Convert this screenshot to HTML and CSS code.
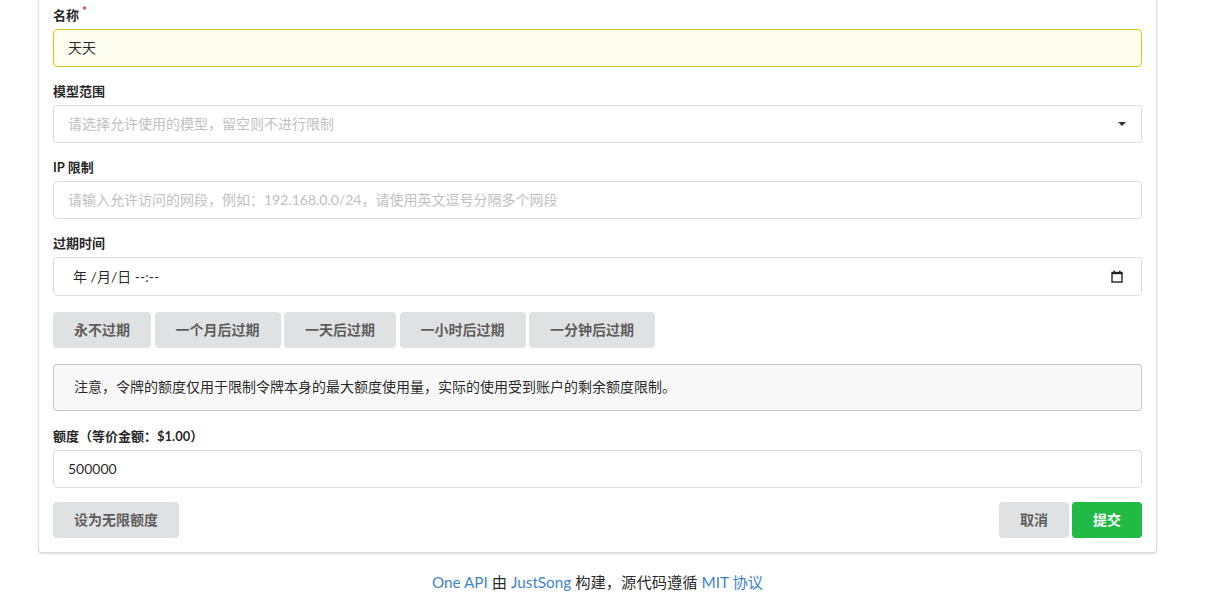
FILE: index.html
```html
<!DOCTYPE html>
<html lang="zh">
<head>
    <meta charset="UTF-8">
    <meta name="viewport" content="width=device-width, initial-scale=1.0">
    <title>编辑令牌</title>
    <link rel="stylesheet" href="styles.css">
</head>
<body>
    <div class="page">
        <div class="segment">
            <form class="form">
                <div class="field">
                    <label class="required">名称</label>
                    <div class="input filled">天天</div>
                </div>
                <div class="field">
                    <label>模型范围</label>
                    <div class="input dropdown">
                        <span class="placeholder">请选择允许使用的模型，留空则不进行限制</span>
                        <span class="caret"></span>
                    </div>
                </div>
                <div class="field">
                    <label>IP 限制</label>
                    <div class="input"><span class="placeholder">请输入允许访问的网段，例如：192.168.0.0/24，请使用英文逗号分隔多个网段</span></div>
                </div>
                <div class="field">
                    <label>过期时间</label>
                    <div class="input date">
                        <span>年 /月/日 --:--</span>
                        <svg class="cal" width="12" height="13" viewBox="0 0 12 13">
                            <rect x="1" y="2.5" width="10" height="9.5" fill="none" stroke="#222" stroke-width="1.4"/>
                            <rect x="1" y="2" width="10" height="2.2" fill="#222"/>
                            <rect x="2.5" y="0.5" width="1.4" height="2.5" fill="#222"/>
                            <rect x="8.1" y="0.5" width="1.4" height="2.5" fill="#222"/>
                        </svg>
                    </div>
                </div>
                <div class="quick">
                    <button type="button" class="btn">永不过期</button>
                    <button type="button" class="btn">一个月后过期</button>
                    <button type="button" class="btn">一天后过期</button>
                    <button type="button" class="btn">一小时后过期</button>
                    <button type="button" class="btn">一分钟后过期</button>
                </div>
                <div class="message">注意，令牌的额度仅用于限制令牌本身的最大额度使用量，实际的使用受到账户的剩余额度限制。</div>
                <div class="field">
                    <label>额度（等价金额：$1.00）</label>
                    <div class="input">500000</div>
                </div>
                <div class="actions">
                    <button type="button" class="btn">设为无限额度</button>
                    <div class="right">
                        <button type="button" class="btn">取消</button>
                        <button type="submit" class="btn positive">提交</button>
                    </div>
                </div>
            </form>
        </div>
        <div class="footer">
            <a href="#">One API</a> 由 <a href="#">JustSong</a> 构建，源代码遵循 <a href="#">MIT 协议</a>
        </div>
    </div>
</body>
</html>
```

FILE: styles.css
```css
body {
    font-family: Lato, "Noto Sans CJK SC", sans-serif;
    font-size: 14px;
    line-height: 20px;
    color: rgba(0, 0, 0, 0.87);
    margin: 0;
    padding: 0;
    background-color: #fff;
}
.page {
    width: 1119px;
    margin-left: 38px;
}
.segment {
    margin-top: -10px;
    padding: 14px;
    border: 1px solid rgba(34, 36, 38, 0.15);
    border-radius: 4px;
    box-shadow: 0 1px 2px 0 rgba(34, 36, 38, 0.15);
    background-color: #fff;
}
.field {
    margin-bottom: 14px;
}
.field label {
    display: block;
    font-size: 13px;
    font-weight: bold;
    line-height: 20px;
    margin-bottom: 4px;
}
.field label.required::after {
    content: "*";
    color: #db2828;
    margin-left: 3px;
    font-size: 12px;
    vertical-align: top;
    position: relative;
    top: -4px;
}
.input {
    box-sizing: border-box;
    height: 38px;
    padding: 0 14px;
    display: flex;
    align-items: center;
    border: 1px solid rgba(34, 36, 38, 0.15);
    border-radius: 4px;
    font-size: 14px;
}
.input.filled {
    background-color: #fefef0;
    border-color: #d6c51e;
}
.placeholder {
    color: #bfbfbf;
}
.dropdown {
    justify-content: space-between;
}
.caret {
    width: 0;
    height: 0;
    border-left: 4px solid transparent;
    border-right: 4px solid transparent;
    border-top: 4px solid #333;
    margin-right: 1px;
}
.date {
    height: 39px;
    padding-left: 19px;
    justify-content: space-between;
}
.cal {
    margin-right: 4px;
}
.quick {
    display: flex;
    gap: 3.5px;
    margin-top: 16px;
    margin-bottom: 16px;
}
.btn {
    font-family: Lato, "Noto Sans CJK SC", sans-serif;
    font-size: 14px;
    font-weight: bold;
    line-height: 20px;
    height: 36px;
    padding: 0 21px;
    border: none;
    border-radius: 4px;
    background-color: #e0e1e2;
    color: rgba(0, 0, 0, 0.6);
    cursor: pointer;
}
.btn.positive {
    background-color: #21ba45;
    color: #fff;
}
.message {
    background-color: #f8f8f9;
    box-shadow: 0 0 0 1px rgba(34, 36, 38, 0.22) inset;
    border-radius: 4px;
    padding: 13px 21px 14px;
    min-height: 47px;
    box-sizing: border-box;
    font-size: 14px;
    margin-bottom: 15px;
}
.actions {
    display: flex;
    justify-content: space-between;
}
.right {
    display: flex;
    gap: 3px;
}
.footer {
    text-align: center;
    margin-top: 19px;
    font-size: 15.3px;
}
.footer a {
    color: #4183c4;
    text-decoration: none;
}
```
